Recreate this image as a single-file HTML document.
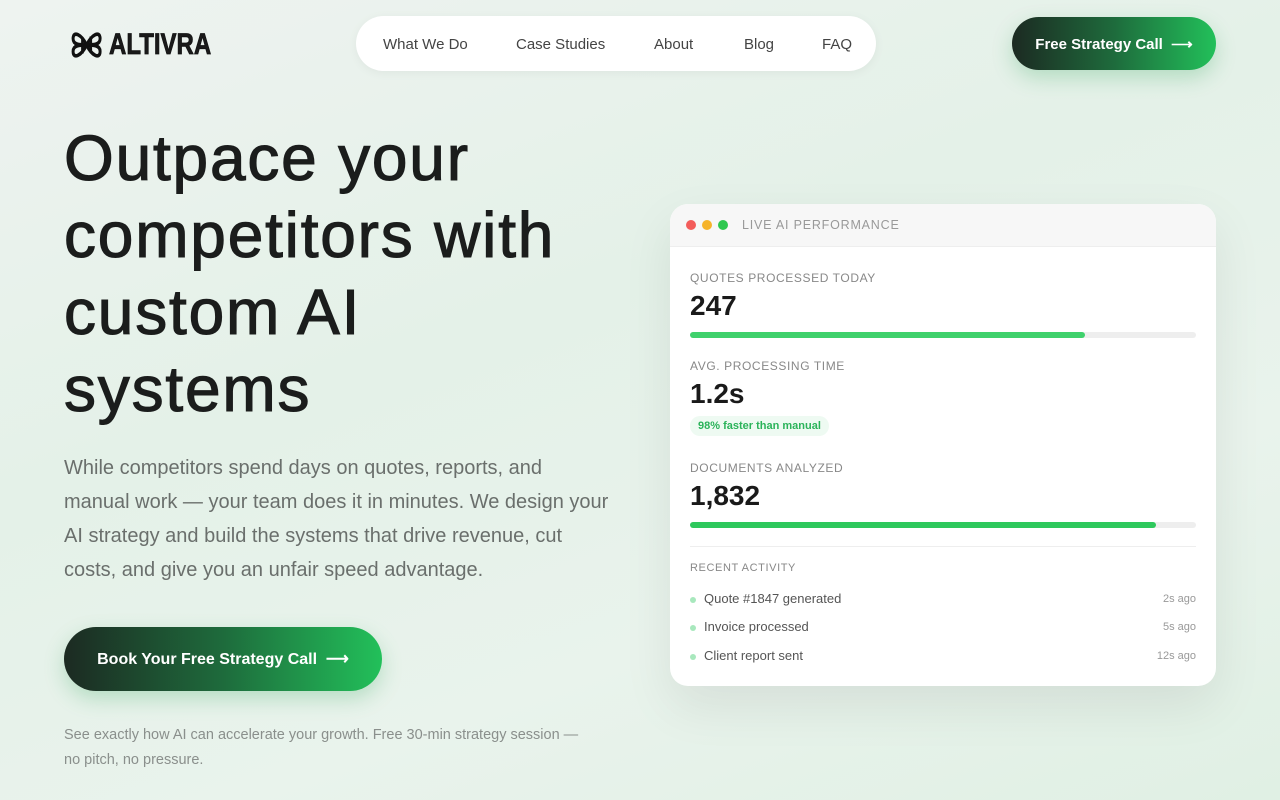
<!DOCTYPE html>
<html><head><meta charset="utf-8"><style>
*{margin:0;padding:0;box-sizing:border-box}
body{width:1280px;height:800px;overflow:hidden;font-family:"Liberation Sans",sans-serif;background:linear-gradient(160deg,#eef3f0 0%,#e4f1e8 40%,#e9f3ec 70%,#e0f0e4 100%);position:relative;color:#1a1a1a}
.logo{position:absolute;left:69px;top:26px;display:flex;align-items:center;gap:6px;font-weight:900;font-size:30px;transform:scaleX(0.8);transform-origin:left;-webkit-text-stroke:0.8px #111}
.nav{position:absolute;left:356px;top:16px;width:520px;height:55px;background:#fff;border-radius:28px;box-shadow:0 2px 10px rgba(0,0,0,.05);font-size:15px;color:#444}
.nav span{position:absolute;top:20px}
.btn{position:absolute;border-radius:40px;color:#fff;font-weight:bold;background:linear-gradient(90deg,#1c2a22 0%,#1e6b3c 50%,#22c05a 100%);box-shadow:0 8px 20px rgba(34,160,80,.25);display:flex;align-items:center;justify-content:center}
h1{position:absolute;left:64px;top:120px;font-size:64px;line-height:77px;font-weight:normal;color:#1b1d1c;letter-spacing:1.8px;-webkit-text-stroke:1.1px #1b1d1c}
.p{position:absolute;left:64px;top:451px;width:545px;font-size:20px;line-height:34px;color:#6a6f6c}
.small{position:absolute;left:64px;top:723px;width:538px;font-size:14.5px;line-height:25px;color:#8a8f8c}
.card{position:absolute;left:670px;top:204px;width:546px;height:482px;background:#fff;border-radius:18px;box-shadow:0 20px 50px rgba(0,0,0,.08);overflow:hidden}
.ch{height:43px;background:#f7f7f7;border-bottom:1px solid #eee;display:flex;align-items:center;padding-left:16px;font-size:12.5px;color:#999;letter-spacing:.8px}
.dot{width:10px;height:10px;border-radius:50%;display:inline-block;margin-right:6px}
.lbl{position:absolute;left:20px;font-size:12px;color:#888;letter-spacing:.6px}
.num{position:absolute;left:20px;font-size:28px;font-weight:bold;color:#1a1a1a}
.bar{position:absolute;left:20px;width:506px;height:6px;background:#eee;border-radius:3px}
.bar i{display:block;height:6px;border-radius:3px;background:#3fd16c}
.act{position:absolute;left:20px;width:506px;font-size:13px;color:#555;display:flex;justify-content:space-between;align-items:center}
.act b{font-weight:normal;font-size:11px;color:#999}
.act span:before{content:"";display:inline-block;width:6px;height:6px;border-radius:50%;background:#a8e8bd;margin-right:8px;vertical-align:middle}
</style></head><body>
<div class="logo"><svg width="44" height="38" viewBox="0 0 40 36" fill="none" stroke="#111" stroke-width="3.5"><path d="M20 18 C14 8 4 4 4 12 C4 18 12 18 20 18 C28 18 36 18 36 24 C36 32 26 28 20 18 Z"/><path d="M20 18 C14 28 4 32 4 24 C4 18 12 18 20 18 C28 18 36 18 36 12 C36 4 26 8 20 18 Z"/><path d="M15 11v15M25 10v15" stroke-width="3"/></svg><span>ALTIVRA</span></div>
<div class="nav"><span style="left:27px">What We Do</span><span style="left:160px">Case Studies</span><span style="left:298px">About</span><span style="left:388px">Blog</span><span style="left:466px">FAQ</span></div>
<div class="btn" style="left:1012px;top:17px;width:204px;height:53px;font-size:15px">Free Strategy Call &nbsp;⟶</div>
<h1>Outpace your<br>competitors with<br>custom AI<br>systems</h1>
<div class="p">While competitors spend days on quotes, reports, and manual work — your team does it in minutes. We design your AI strategy and build the systems that drive revenue, cut costs, and give you an unfair speed advantage.</div>
<div class="btn" style="left:64px;top:627px;width:318px;height:64px;font-size:16px">Book Your Free Strategy Call &nbsp;⟶</div>
<div class="small">See exactly how AI can accelerate your growth. Free 30-min strategy session —<br>no pitch, no pressure.</div>
<div class="card">
<div class="ch"><span class="dot" style="background:#f35d5b"></span><span class="dot" style="background:#f6b42b"></span><span class="dot" style="background:#2ec84f;margin-right:14px"></span>LIVE AI PERFORMANCE</div>
<div class="lbl" style="top:67px">QUOTES PROCESSED TODAY</div>
<div class="num" style="top:86px">247</div>
<div class="bar" style="top:128px"><i style="width:78%"></i></div>
<div class="lbl" style="top:155px">AVG. PROCESSING TIME</div>
<div class="num" style="top:174px">1.2s</div>
<div style="position:absolute;left:20px;top:212px;padding:4px 8px;background:#eefaf2;border-radius:10px;font-size:11px;font-weight:bold;color:#2bb35a">98% faster than manual</div>
<div class="lbl" style="top:257px">DOCUMENTS ANALYZED</div>
<div class="num" style="top:276px">1,832</div>
<div class="bar" style="top:318px"><i style="width:92%;background:#2ec85c"></i></div>
<div style="position:absolute;left:20px;top:342px;width:506px;border-top:1px solid #eee"></div>
<div class="lbl" style="top:358px;font-size:11px">RECENT ACTIVITY</div>
<div class="act" style="top:387px"><span>Quote #1847 generated</span><b>2s ago</b></div>
<div class="act" style="top:415px"><span>Invoice processed</span><b>5s ago</b></div>
<div class="act" style="top:444px"><span>Client report sent</span><b>12s ago</b></div>
</div>
</body></html>
